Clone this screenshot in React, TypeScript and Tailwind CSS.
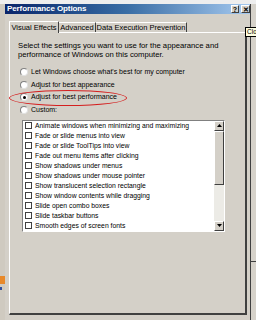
import React from "react";

const items = [
  "Animate windows when minimizing and maximizing",
  "Fade or slide menus into view",
  "Fade or slide ToolTips into view",
  "Fade out menu items after clicking",
  "Show shadows under menus",
  "Show shadows under mouse pointer",
  "Show translucent selection rectangle",
  "Show window contents while dragging",
  "Slide open combo boxes",
  "Slide taskbar buttons",
  "Smooth edges of screen fonts",
];

const radios = [
  { label: "Let Windows choose what's best for my computer", on: false },
  { label: "Adjust for best appearance", on: false },
  { label: "Adjust for best performance", on: true },
  { label: "Custom:", on: false },
];

function Radio({ on }: { on: boolean }) {
  return (
    <div className="w-[8px] h-[8px] rounded-full bg-white border border-t-[#808080] border-l-[#808080] border-r-[#e0e0e0] border-b-[#e0e0e0] flex items-center justify-center shrink-0">
      {on && <div className="w-[3px] h-[3px] rounded-full bg-black" />}
    </div>
  );
}

export default function App() {
  return (
    <div
      className="w-[256px] h-[320px] overflow-hidden bg-[#d4d0c8] flex flex-col relative"
      style={{ fontFamily: '"Liberation Sans", Arial, sans-serif' }}
    >
      <div className="h-[4px] bg-[#eeeeee] shrink-0" />
      <div className="flex flex-1">
        {/* left background strip */}
        <div className="w-[5px] bg-[#cfcac0] flex flex-col shrink-0">
          <div className="h-[272px]" />
          <div className="h-[8px] bg-[#e8892a]" />
          <div className="h-[3px]" />
          <div className="h-[3px] w-[2px] bg-[#3050a0]" />
        </div>
        {/* dialog */}
        <div className="w-[246px] flex flex-col border-r border-[#404040] shrink-0">
          <div className="h-[10px] flex items-center justify-between pl-[2px] bg-gradient-to-r from-[#0a246a] via-[#3a6ea5] to-[#a6caf0] shrink-0">
            <span className="text-white font-bold text-[8px] leading-[10px] tracking-[-0.1px]">Performance Options</span>
            <div className="flex gap-[2px] items-center">
              <div className="w-[8px] h-[8px] bg-[#d4d0c8] border border-t-white border-l-white border-r-[#404040] border-b-[#404040] flex items-center justify-center text-[7px] font-bold leading-none text-black">?</div>
              <div className="w-[9px] h-[8px] bg-[#d4d0c8] border border-t-white border-l-white border-r-[#404040] border-b-[#404040] flex items-center justify-center text-[7px] font-bold leading-none text-black">✕</div>
            </div>
          </div>
          <div className="flex flex-col pl-[4px] pr-[3px] pt-[6px] flex-1">
            {/* tabs */}
            <div className="flex items-end h-[12px] text-[7.5px] text-black">
              <div className="h-[12px] w-[50px] border-t border-l border-white border-r border-r-[#404040] bg-[#d4d0c8] flex items-center justify-center rounded-t-[1px] -mb-px z-10 relative">
                Visual Effects
              </div>
              <div className="h-[10px] w-[37px] border-t border-white border-r border-r-[#404040] flex items-center justify-center">
                Advanced
              </div>
              <div className="h-[10px] w-[91px] border-t border-white border-r border-r-[#404040] flex items-center justify-center">
                Data Execution Prevention
              </div>
            </div>
            {/* panel */}
            <div className="flex-1 border-t border-l border-white border-r-2 border-b-2 border-r-[#404040] border-b-[#404040] relative flex flex-col pl-[8px] pt-[8px] text-black">
              <div className="leading-[9px] text-[7.7px]">
                Select the settings you want to use for the appearance and
                <br />
                performance of Windows on this computer.
              </div>
              <div className="flex flex-col pl-[2px] mt-[9px] gap-[4.6px] text-[7px]">
                {radios.map((r) => (
                  <div key={r.label} className="flex items-center gap-[3px] h-[8px] leading-[8px]">
                    <Radio on={r.on} />
                    <span>{r.label}</span>
                  </div>
                ))}
              </div>
              {/* red ellipse overlay */}
              <div className="absolute left-[-1px] top-[57px] w-[118px] h-[16px] rounded-[50%] border border-[#d42020]" />
              {/* list */}
              <div className="ml-[4px] mt-[6px] w-[203px] h-[112px] bg-white border border-t-[#808080] border-l-[#808080] border-r-white border-b-white flex text-[6.8px]">
                <div className="flex-1 flex flex-col pl-[2px]">
                  {items.map((t) => (
                    <div key={t} className="h-[10.2px] flex items-center gap-[3px] leading-[8px]">
                      <div className="w-[7px] h-[7px] border border-[#404040] bg-white shrink-0" />
                      <span>{t}</span>
                    </div>
                  ))}
                </div>
                <div className="w-[10px] flex flex-col">
                  <div className="h-[10px] bg-[#d4d0c8] border border-t-white border-l-white border-r-[#404040] border-b-[#404040] flex items-center justify-center">
                    <svg width="5" height="3" viewBox="0 0 5 3"><path d="M2.5 0 L5 3 L0 3 Z" fill="black" /></svg>
                  </div>
                  <div className="h-[54px] bg-[#d4d0c8] border border-t-white border-l-white border-r-[#404040] border-b-[#404040]" />
                  <div className="flex-1 bg-[#ecebe6]" />
                  <div className="h-[10px] bg-[#d4d0c8] border border-t-white border-l-white border-r-[#404040] border-b-[#404040] flex items-center justify-center">
                    <svg width="5" height="3" viewBox="0 0 5 3"><path d="M0 0 L5 0 L2.5 3 Z" fill="black" /></svg>
                  </div>
                </div>
              </div>
            </div>
            <div className="h-[5px] shrink-0" />
          </div>
        </div>
        {/* right background strip */}
        <div className="flex-1 bg-[#d6d2ca] flex flex-col">
          <div className="h-[257px]" />
          <div className="h-[1px] bg-[#404040]" />
        </div>
      </div>
      {/* tooltip overlay */}
      <div className="absolute left-[245px] top-[27px] h-[10px] w-[14px] bg-[#ffffe1] border border-black text-[6.5px] leading-[8px] pl-[1px] text-black">
        Clo
      </div>
    </div>
  );
}
